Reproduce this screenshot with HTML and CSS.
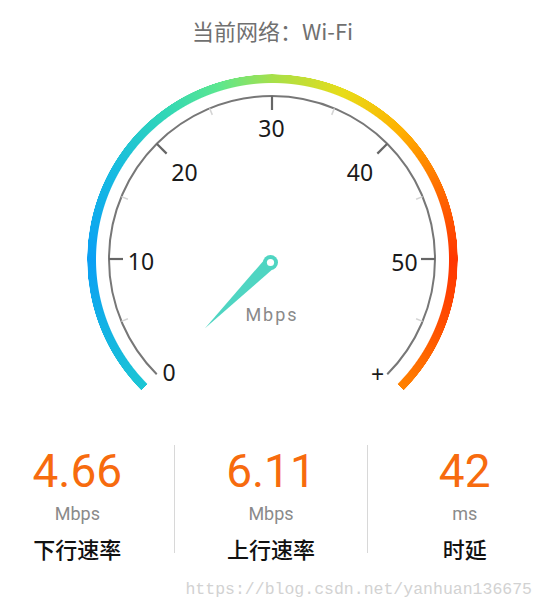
FILE: index.html
```html
<!DOCTYPE html>
<html lang="zh">
  <head>
    <meta charset="UTF-8" />
    <meta name="viewport" content="width=device-width, initial-scale=1.0" />
    <title>网络测速</title>
    <link rel="stylesheet" href="styles.css">
  </head>
  <body>
    <div class="page">
      <h1 class="network">当前网络：Wi-Fi</h1>

      <!-- 仪表盘 -->
      <div class="gauge">
        <div class="ring"></div>
        <svg class="dial" width="545" height="380" viewBox="0 0 545 380">
          <path class="scale" d="M156.74 314.26 A163 163 0 1 1 387.26 314.26" />

          <g class="tick-major">
            <line x1="109" y1="199" x2="123" y2="199" />
            <line x1="156.74" y1="83.74" x2="166.64" y2="93.64" />
            <line x1="272" y1="36" x2="272" y2="50" />
            <line x1="387.26" y1="83.74" x2="377.36" y2="93.64" />
            <line x1="435" y1="199" x2="421" y2="199" />
          </g>

          <g class="tick-minor">
            <line x1="121.4" y1="261.4" x2="127.9" y2="258.7" />
            <line x1="121.4" y1="136.6" x2="127.9" y2="139.3" />
            <line x1="209.6" y1="48.4" x2="212.3" y2="54.9" />
            <line x1="334.4" y1="48.4" x2="331.7" y2="54.9" />
            <line x1="422.6" y1="136.6" x2="416.1" y2="139.3" />
            <line x1="422.6" y1="261.4" x2="416.1" y2="258.7" />
          </g>

          <g class="labels">
            <text x="169" y="312">0</text>
            <text x="141" y="201">10</text>
            <text x="184.5" y="111.5">20</text>
            <text x="271.5" y="68">30</text>
            <text x="360" y="111.5">40</text>
            <text x="404.5" y="202">50</text>
            <text x="377.5" y="314">+</text>
          </g>

          <text class="unit" x="272" y="254">Mbps</text>

          <!-- 指针 -->
          <g class="needle">
            <polygon points="205,268.3 275.1,207.1 265.9,197.9" />
            <circle cx="270.5" cy="202.5" r="7.5" />
          </g>
          <circle class="pivot" cx="270.5" cy="202.5" r="3.6" />
        </svg>
      </div>

      <!-- 测速结果 -->
      <div class="stats">
        <div class="stat">
          <div class="value">4.66</div>
          <div class="stat-unit">Mbps</div>
          <div class="name">下行速率</div>
        </div>
        <div class="divider"></div>
        <div class="stat">
          <div class="value">6.11</div>
          <div class="stat-unit">Mbps</div>
          <div class="name">上行速率</div>
        </div>
        <div class="divider"></div>
        <div class="stat">
          <div class="value">42</div>
          <div class="stat-unit">ms</div>
          <div class="name">时延</div>
        </div>
      </div>

      <div class="watermark">https://blog.csdn.net/yanhuan136675</div>
    </div>
  </body>
</html>
```

FILE: styles.css
```css
* {
  margin: 0;
  padding: 0;
  box-sizing: border-box;
}

body {
  background: #fff;
  font-family: Roboto, "Noto Sans", "Noto Sans CJK SC", sans-serif;
  overflow: hidden;
}

.page {
  width: 545px;
  height: 602px;
}

.network {
  height: 60px;
  line-height: 60px;
  text-align: center;
  font-family: "Noto Sans CJK SC", sans-serif;
  font-size: 22px;
  font-weight: normal;
  color: #707070;
}

/* 仪表盘 */
.gauge {
  position: relative;
  height: 380px;
}

.ring {
  position: absolute;
  left: 86.5px;
  top: 13.5px;
  width: 371px;
  height: 371px;
  border-radius: 50%;
  background: conic-gradient(
    from 225deg,
    #1cc6d4 0deg,
    #0a9ff4 45deg,
    #17bce0 75deg,
    #33d8b4 100deg,
    #5de78e 118deg,
    #a6e04a 135deg,
    #e8dc18 158deg,
    #ffb000 180deg,
    #ff6400 205deg,
    #ff3600 225deg,
    #ff4c00 245deg,
    #ff8200 270deg,
    transparent 270deg
  );
  -webkit-mask: radial-gradient(
    closest-side,
    transparent 176px,
    #000 177px,
    #000 185px,
    transparent 185.5px
  );
  mask: radial-gradient(
    closest-side,
    transparent 176px,
    #000 177px,
    #000 185px,
    transparent 185.5px
  );
}

.dial {
  display: block;
  position: relative;
}

.scale {
  fill: none;
  stroke: #777;
  stroke-width: 2;
}

.tick-major line {
  stroke: #666;
  stroke-width: 2.2;
}

.tick-minor line {
  stroke: #d4d4d4;
  stroke-width: 1.5;
}

.labels text {
  font-family: "Noto Sans", sans-serif;
  font-size: 23px;
  fill: #1a1a1a;
  text-anchor: middle;
  dominant-baseline: central;
}

.unit {
  font-family: Roboto, sans-serif;
  font-size: 18px;
  letter-spacing: 2px;
  fill: #8a8a8a;
  text-anchor: middle;
  dominant-baseline: central;
}

.needle {
  fill: #4fd5c2;
}

.pivot {
  fill: #fff;
}

/* 测速结果 */
.stats {
  display: grid;
  grid-template-columns: 1fr 1px 1fr 1px 1fr;
  align-items: start;
  margin: 0 -16px 0 -19px;
  padding-top: 5px;
}

.stat {
  padding-top: 3px;
  text-align: center;
}

.value {
  font-family: Roboto, sans-serif;
  font-size: 46px;
  line-height: 46px;
  color: #f76b0e;
}

.stat-unit {
  margin-top: 11px;
  font-family: Roboto, sans-serif;
  font-size: 18px;
  line-height: 18px;
  color: #8a8a8a;
}

.name {
  margin-top: 14px;
  font-family: "Noto Sans CJK SC", sans-serif;
  font-size: 22px;
  line-height: 22px;
  font-weight: 500;
  color: #111;
}

.divider {
  width: 1px;
  height: 108px;
  background-color: #d8d8d8;
}

.watermark {
  margin-top: 21px;
  padding-right: 13px;
  text-align: right;
  font-family: "Liberation Mono", monospace;
  font-size: 16.5px;
  line-height: 20px;
  color: #d2d2d2;
}
```
